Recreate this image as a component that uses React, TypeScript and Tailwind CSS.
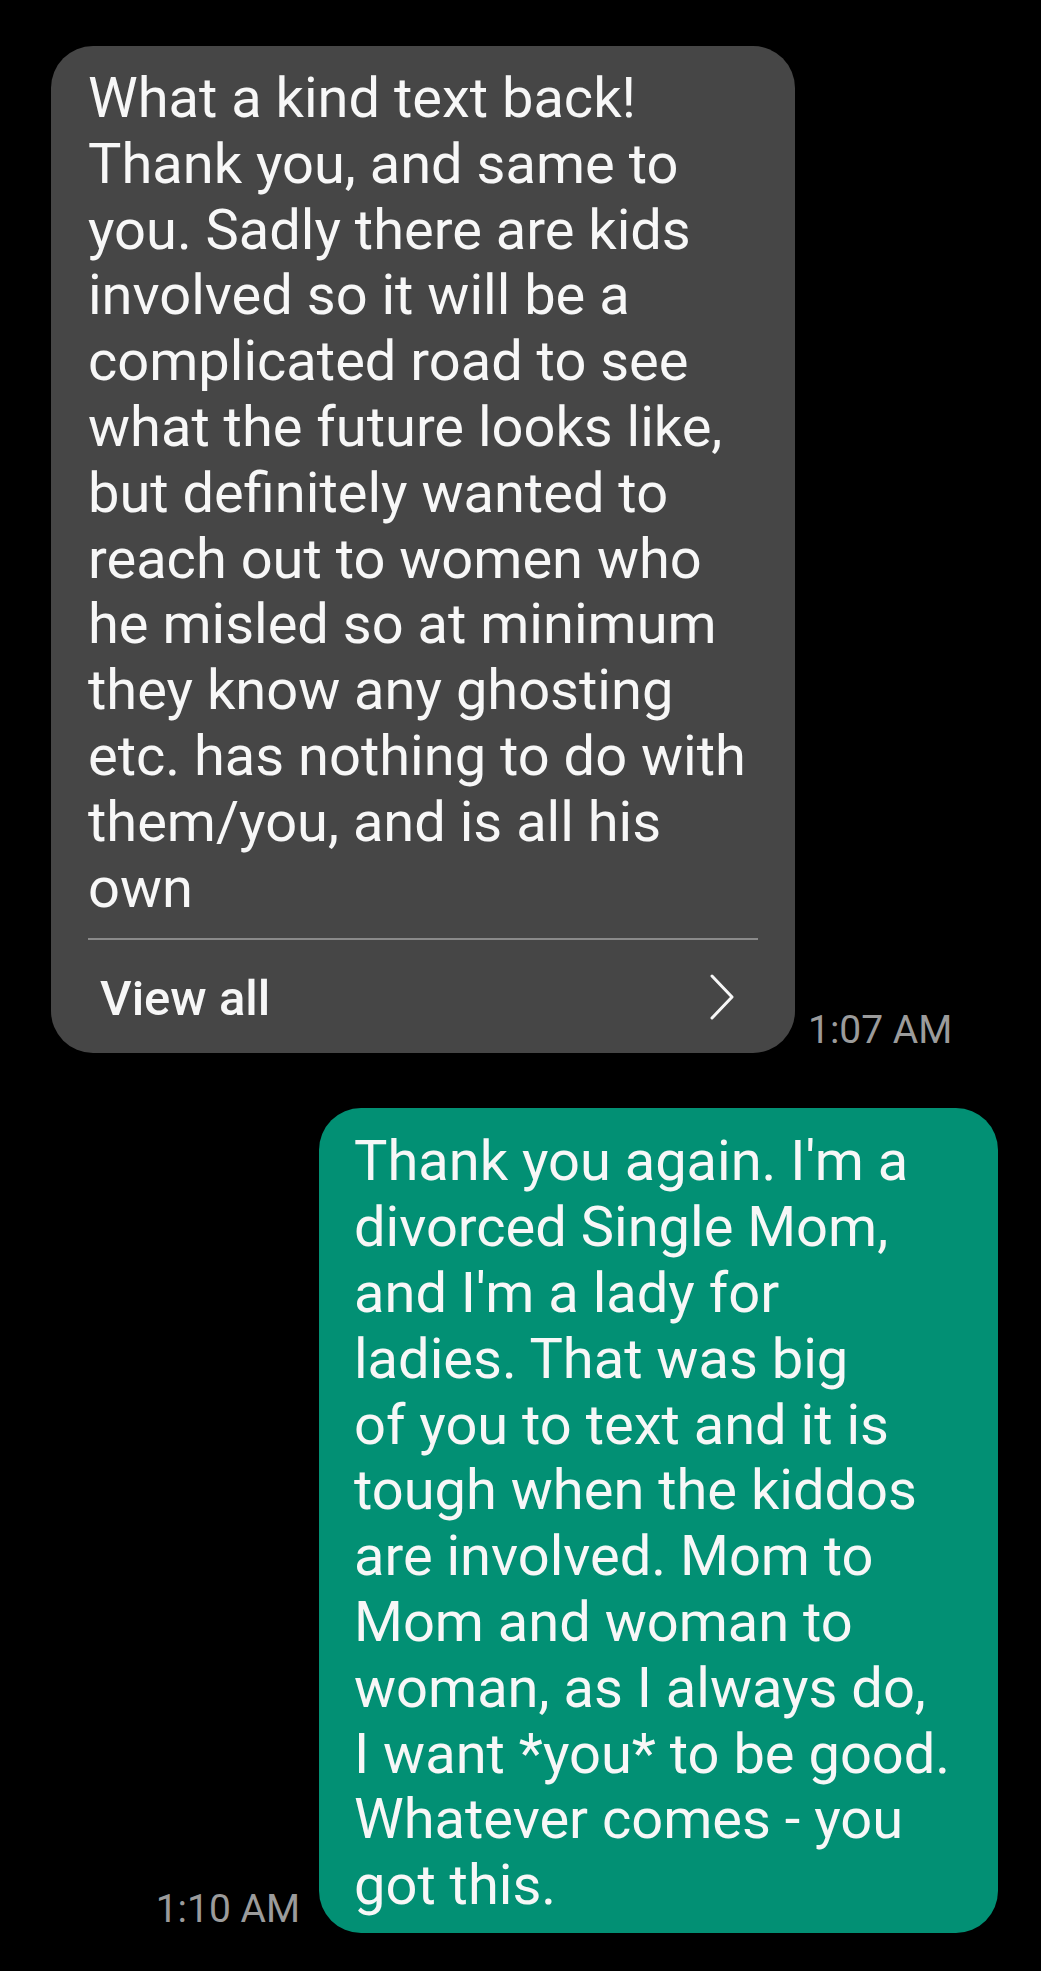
import React from "react";

const incomingLines = [
  "What a kind text back!",
  "Thank you, and same to",
  "you. Sadly there are kids",
  "involved so it will be a",
  "complicated road to see",
  "what the future looks like,",
  "but definitely wanted to",
  "reach out to women who",
  "he misled so at minimum",
  "they know any ghosting",
  "etc. has nothing to do with",
  "them/you, and is all his",
  "own",
];

const outgoingLines = [
  "Thank you again. I'm a",
  "divorced Single Mom,",
  "and I'm a lady for",
  "ladies. That was big",
  "of you to text and it is",
  "tough when the kiddos",
  "are involved. Mom to",
  "Mom and woman to",
  "woman, as I always do,",
  "I want *you* to be good.",
  "Whatever comes - you",
  "got this.",
];

// Each line is its own block so the wrapping matches the phone exactly
function MessageText({ lines }: { lines: string[] }) {
  return (
    <div className="text-[56px] leading-[65.8px] text-[#f7f7f7]">
      {lines.map((line, i) => (
        <div key={i} className="whitespace-nowrap">
          {line}
        </div>
      ))}
    </div>
  );
}

function Timestamp({ time, className }: { time: string; className?: string }) {
  return <span className={`text-[39px] leading-[44px] text-[#9b9b9b] whitespace-nowrap ${className ?? ""}`}>{time}</span>;
}

export default function App() {
  return (
    <div className="min-h-[1971px] w-full bg-black pt-[46px]" style={{ fontFamily: "Roboto, 'Noto Sans', sans-serif" }}>
      {/* incoming */}
      <div className="flex items-end pl-[51px]">
        <div className="w-[744px] rounded-[42px] bg-[#464646]">
          <div className="px-[37px] pt-[20px]">
            <MessageText lines={incomingLines} />
            <div className="mt-[17px] h-[2px] bg-[#8a8a8a]" />
          </div>
          <div className="flex h-[113px] items-center justify-between pl-[49px] pr-[60px]">
            <span className="pt-[4px] text-[49px] font-medium leading-[56px] text-[#f7f7f7]">View all</span>
            <svg width="26" height="48" viewBox="0 0 26 48" fill="none">
              <path d="M3 3 L23 24 L3 45" stroke="#f7f7f7" strokeWidth="3" strokeLinecap="round" strokeLinejoin="round" />
            </svg>
          </div>
        </div>
        <Timestamp time="1:07 AM" className="mb-[1px] ml-[13px]" />
      </div>

      {/* outgoing */}
      <div className="mt-[55px] flex items-end justify-end pr-[43px]">
        <Timestamp time="1:10 AM" className="mb-[2px] mr-[19px]" />
        <div className="w-[679px] rounded-[42px] bg-[#029074] pb-[14px] pl-[35px] pr-[30px] pt-[21px]">
          <MessageText lines={outgoingLines} />
        </div>
      </div>
    </div>
  );
}
